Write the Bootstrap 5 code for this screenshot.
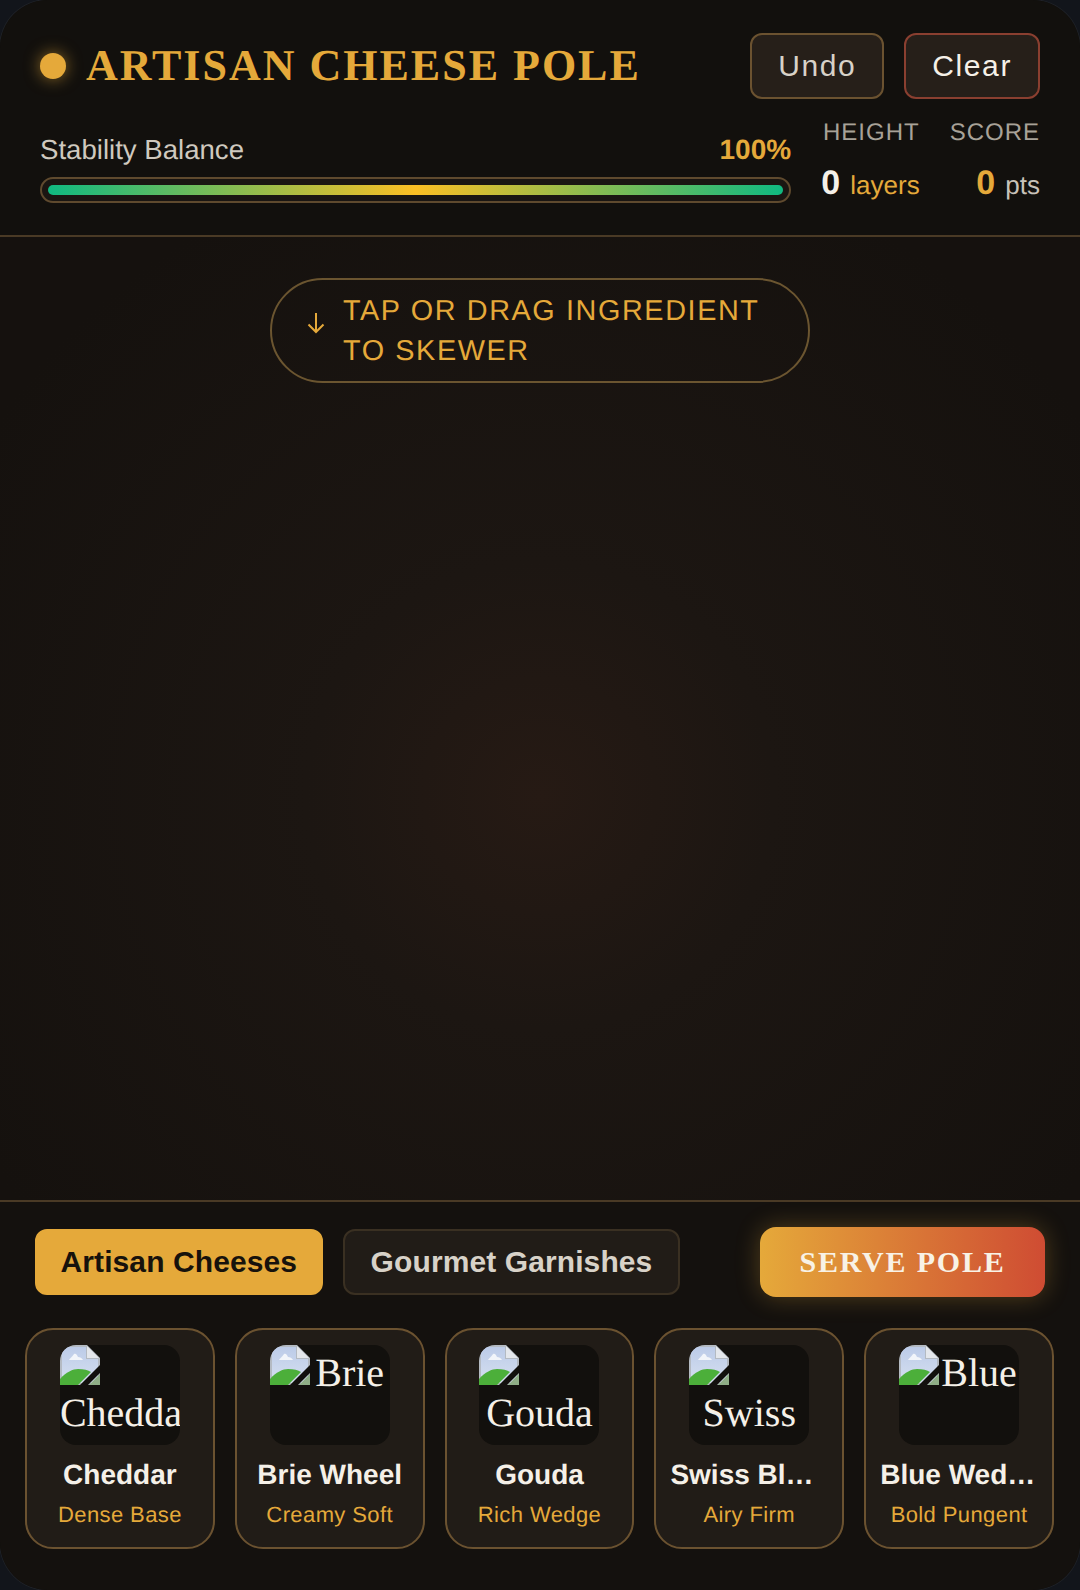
<!DOCTYPE html>
<html lang="en">
<head>
<meta charset="UTF-8">
<meta name="viewport" content="width=device-width, initial-scale=1.0">
<title>Artisan Cheese Pole</title>
<link href="https://cdn.jsdelivr.net/npm/bootstrap@5.3.0/dist/css/bootstrap.min.css" rel="stylesheet">
<style>
:root { --amber: #e5a93a; --line: #4a3a25; --edge: #6b5230; }
html, body { height: 100%; }
body { background: #12151b; font-family: "Liberation Sans", Arial, sans-serif; color: #f5f0e8; text-rendering: geometricPrecision; }
.app-frame { width: 1080px; height: 1590px; border-radius: 48px; overflow: hidden; display: flex; flex-direction: column; background: #12100d; box-shadow: 0 0 0 1px rgba(255,255,255,.05); }
.gap-wide { gap: 20px; }

.top-bar { height: 237px; flex: none; padding: 33px 40px 0; border-bottom: 2px solid var(--line); background: #12100d; }
.status-dot { width: 26px; height: 26px; border-radius: 50%; background: var(--amber); box-shadow: 0 0 16px rgba(229,169,58,.6); }
.app-title { font-family: "Liberation Serif", serif; font-weight: 700; font-size: 44px; letter-spacing: 2px; color: var(--amber); margin: 0; line-height: 66px; }
.tool-btn { height: 66px; padding: 0 26px; background: #261f19; border: 2px solid var(--edge); border-radius: 12px; color: #d8d2c8; font-size: 30px; letter-spacing: 1.6px; line-height: 1; }
.tool-btn.danger { border-color: #8a3f30; color: #f5f0e8; }
.stats-bar { margin-top: 16px; gap: 30px; }
.meter-col { padding-top: 15px; }
.meter-label { font-size: 27.6px; line-height: 40px; color: #cfc9bf; }
.meter-value { font-size: 28px; line-height: 40px; font-weight: 700; color: var(--amber); }
.meter-track { height: 26px; margin-top: 7px; padding: 6px; border: 2px solid #5f4a2e; border-radius: 13px; background: #1a1612; }
.meter-fill { height: 100%; border-radius: 5px; background: linear-gradient(90deg, #10b981, #fbbf24 50%, #10b981); }
.stat-col { padding-top: 3px; gap: 30px; }
.stat-head { font-size: 24px; letter-spacing: 1px; line-height: 30px; color: #a8a298; }
.stat-row { line-height: 44px; margin-top: 13px; font-size: 26px; }
.stat-num { font-size: 34px; font-weight: 700; margin-right: 3px; }
.stat-unit { color: var(--amber); }
.stat-unit-plain { color: #c8c2b8; }
.text-amber { color: var(--amber); }

.play-area { flex: 1 1 auto; padding-top: 41px; border-bottom: 2px solid var(--line); background: radial-gradient(circle at 50% 58%, #261a14 0%, #1c1612 30%, #15110e 85%); }
.hint-pill { width: 540px; height: 105px; border: 2px solid #6b5530; border-radius: 53px; padding: 0 30px 0 34px; color: var(--amber); font-size: 28.8px; line-height: 40px; letter-spacing: 1.6px; gap: 17px; }
.hint-pill svg { flex: none; margin-bottom: 16px; }

.tray { flex: none; height: 388px; background: #14110e; padding: 25px 26px 0 25px; }
.tab-btn { height: 66px; padding: 0 26px; border: 2px solid #3a3022; border-radius: 12px; background: #211c17; color: #d8d2c8; font-size: 30px; letter-spacing: .1px; font-weight: 700; line-height: 1; }
.tab-btn.picked { padding: 0 23.500px; background: var(--amber); border-color: var(--amber); color: #17120c; }
.serve-btn { height: 70px; width: 285px; border: 0; border-radius: 16px; background: linear-gradient(90deg, #e5a93a, #cf4c33); color: #f8f2e6; font-family: "Liberation Serif", serif; font-weight: 700; font-size: 30px; letter-spacing: 1.8px; box-shadow: 0 0 24px rgba(229,169,58,.3); line-height: 1; }
.tab-row { padding: 0 9px 0 10px; margin-bottom: 31px; }
.cheese-grid { display: grid; grid-template-columns: repeat(5, minmax(0, 1fr)); gap: 20px; }
.cheese-card { height: 221px; border: 2px solid var(--edge); border-radius: 28px; background: #211c17; padding: 15px 14px 0; text-align: center; }
.cheese-pic { width: 120px; height: 100px; margin: 0 auto 10px; border-radius: 16px; background: #12100d; overflow: hidden; text-align: center; font-family: "Liberation Serif", serif; font-size: 40px; line-height: 56px; color: #f5f0e8; }
.cheese-pic svg { float: left; display: block; }
.cheese-name { font-size: 28px; font-weight: 700; line-height: 40px; white-space: nowrap; overflow: hidden; text-overflow: ellipsis; }
.cheese-note { font-size: 22px; letter-spacing: .4px; line-height: 40px; color: var(--amber); white-space: nowrap; }
</style>
</head>
<body>
<svg width="0" height="0" class="position-absolute">
  <defs>
    <linearGradient id="sky" x1="0" y1="0" x2="0" y2="1"><stop offset="0" stop-color="#bccbe8"/><stop offset="1" stop-color="#d6e0f0"/></linearGradient>
    <symbol id="broken-pic" viewBox="0 0 40 40">
      <path d="M4 0H27L40 13V40H0V4Z" fill="#b4bac2"/>
      <path d="M4 2H26V14H38V38H2V4Z" fill="url(#sky)"/>
      <path d="M9 15C10 13 12 12 14 9C16 8 17 10 18 12C20 12 22 13 23 15Z" fill="#f2f5fa"/>
      <path d="M0 40V34C6 27 13 24 18 24C24 24 28 25 31 27L18 40Z" fill="#4caf3a"/>
      <path d="M27 1L39 13H27Z" fill="#e4e7ec"/>
      <path d="M29 40L40 29V40Z" fill="#8fae86"/>
      <path d="M40 20L20 40H28L40 28Z" fill="#12100d"/>
    </symbol>
  </defs>
</svg>

<div class="app-frame">
  <header class="top-bar">
    <div class="d-flex align-items-center justify-content-between">
      <div class="d-flex align-items-center gap-wide">
        <span class="status-dot"></span>
        <h1 class="app-title">ARTISAN CHEESE POLE</h1>
      </div>
      <div class="d-flex gap-wide">
        <button class="tool-btn">Undo</button>
        <button class="tool-btn danger">Clear</button>
      </div>
    </div>
    <div class="d-flex stats-bar">
      <div class="flex-grow-1 meter-col">
        <div class="d-flex justify-content-between">
          <span class="meter-label">Stability Balance</span>
          <span class="meter-value">100%</span>
        </div>
        <div class="meter-track"><div class="meter-fill"></div></div>
      </div>
      <div class="d-flex stat-col">
        <div class="text-end">
          <div class="stat-head">HEIGHT</div>
          <div class="stat-row"><span class="stat-num">0</span> <span class="stat-unit">layers</span></div>
        </div>
        <div class="text-end">
          <div class="stat-head">SCORE</div>
          <div class="stat-row"><span class="stat-num text-amber">0</span> <span class="stat-unit-plain">pts</span></div>
        </div>
      </div>
    </div>
  </header>

  <main class="play-area">
    <div class="hint-pill mx-auto d-flex align-items-center">
      <svg width="20" height="22" viewBox="0 0 20 22" fill="none" stroke="#e5a93a" stroke-width="2"><path d="M10 1V20M2.500 12.500L10 20L17.500 12.500"/></svg>
      <span>TAP OR DRAG INGREDIENT TO SKEWER</span>
    </div>
  </main>

  <section class="tray">
    <div class="tab-row d-flex align-items-center gap-wide">
      <button class="tab-btn picked">Artisan Cheeses</button>
      <button class="tab-btn">Gourmet Garnishes</button>
      <button class="serve-btn ms-auto">SERVE POLE</button>
    </div>
    <div class="cheese-grid">
      <div class="cheese-card">
        <div class="cheese-pic"><svg width="40" height="40"><use href="#broken-pic"/></svg>Cheddar</div>
        <div class="cheese-name">Cheddar</div>
        <div class="cheese-note">Dense Base</div>
      </div>
      <div class="cheese-card">
        <div class="cheese-pic"><svg width="40" height="40"><use href="#broken-pic"/></svg>Brie</div>
        <div class="cheese-name">Brie Wheel</div>
        <div class="cheese-note">Creamy Soft</div>
      </div>
      <div class="cheese-card">
        <div class="cheese-pic"><svg width="40" height="40"><use href="#broken-pic"/></svg>Gouda</div>
        <div class="cheese-name">Gouda</div>
        <div class="cheese-note">Rich Wedge</div>
      </div>
      <div class="cheese-card">
        <div class="cheese-pic"><svg width="40" height="40"><use href="#broken-pic"/></svg>Swiss</div>
        <div class="cheese-name">Swiss Block</div>
        <div class="cheese-note">Airy Firm</div>
      </div>
      <div class="cheese-card">
        <div class="cheese-pic"><svg width="40" height="40"><use href="#broken-pic"/></svg>Blue</div>
        <div class="cheese-name">Blue Wedge</div>
        <div class="cheese-note">Bold Pungent</div>
      </div>
    </div>
  </section>
</div>
<script src="https://cdn.jsdelivr.net/npm/bootstrap@5.3.0/dist/js/bootstrap.bundle.min.js"></script>
</body>
</html>
